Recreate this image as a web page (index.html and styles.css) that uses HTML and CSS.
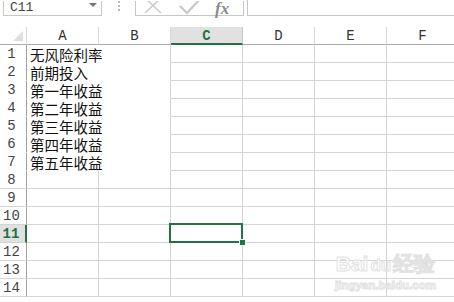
FILE: index.html
```html
<!DOCTYPE html>
<html>
<head>
<title>sheet</title>
<link rel="stylesheet" href="styles.css">
</head>
<body>
<div class="toolbar">
  <div class="namebox">C11<span class="drop"></span></div>
  <div class="dots">
    <svg width="4" height="12" viewBox="0 0 4 12"><rect x="1" y="1" width="2" height="2" fill="#b8b8b8"/><rect x="1" y="5" width="2" height="2" fill="#b8b8b8"/><rect x="1" y="9" width="2" height="2" fill="#b8b8b8"/></svg>
  </div>
  <div class="btns">
    <svg class="ico" width="20" height="14" viewBox="0 0 20 14"><path d="M2 -3 L18 12 M18 -3 L2 12" stroke="#cbcbcb" stroke-width="1.6" fill="none"/></svg>
    <svg class="ico" width="22" height="14" viewBox="0 0 22 14"><path d="M1 5 L8 12 L21 -2" stroke="#cbcbcb" stroke-width="2.4" fill="none"/></svg>
    <span class="fx">fx</span>
  </div>
  <div class="formula"></div>
</div>

<div class="sheet">
  <div class="row head">
    <div class="corner"><span class="tri"></span></div>
    <div class="colh">A</div><div class="colh">B</div><div class="colh sel">C</div>
    <div class="colh">D</div><div class="colh">E</div><div class="colh">F</div>
  </div>

  <div class="row"><div class="rh nb">1</div><div class="c nb nr txt">无风险利率</div><div class="c nb"></div><div class="c"></div><div class="c"></div><div class="c"></div><div class="c"></div></div>
  <div class="row"><div class="rh nb">2</div><div class="c nb nr txt">前期投入</div><div class="c nb"></div><div class="c"></div><div class="c"></div><div class="c"></div><div class="c"></div></div>
  <div class="row"><div class="rh nb">3</div><div class="c nb nr txt">第一年收益</div><div class="c nb"></div><div class="c"></div><div class="c"></div><div class="c"></div><div class="c"></div></div>
  <div class="row"><div class="rh nb">4</div><div class="c nb nr txt">第二年收益</div><div class="c nb"></div><div class="c"></div><div class="c"></div><div class="c"></div><div class="c"></div></div>
  <div class="row"><div class="rh nb">5</div><div class="c nb nr txt">第三年收益</div><div class="c nb"></div><div class="c"></div><div class="c"></div><div class="c"></div><div class="c"></div></div>
  <div class="row"><div class="rh nb">6</div><div class="c nb nr txt">第四年收益</div><div class="c nb"></div><div class="c"></div><div class="c"></div><div class="c"></div><div class="c"></div></div>
  <div class="row"><div class="rh nb">7</div><div class="c nb nr txt">第五年收益</div><div class="c nb"></div><div class="c"></div><div class="c"></div><div class="c"></div><div class="c"></div></div>
  <div class="row"><div class="rh">8</div><div class="c"></div><div class="c"></div><div class="c"></div><div class="c"></div><div class="c"></div><div class="c"></div></div>
  <div class="row"><div class="rh">9</div><div class="c"></div><div class="c"></div><div class="c"></div><div class="c"></div><div class="c"></div><div class="c"></div></div>
  <div class="row"><div class="rh">10</div><div class="c"></div><div class="c"></div><div class="c"></div><div class="c"></div><div class="c"></div><div class="c"></div></div>
  <div class="row"><div class="rh sel">11</div><div class="c"></div><div class="c"></div><div class="c active"><span class="handle"></span></div><div class="c"></div><div class="c"></div><div class="c"></div></div>
  <div class="row"><div class="rh">12</div><div class="c"></div><div class="c"></div><div class="c"></div><div class="c"></div><div class="c"></div><div class="c"></div></div>
  <div class="row"><div class="rh">13</div><div class="c"></div><div class="c"></div><div class="c"></div><div class="c"></div><div class="c"></div><div class="c"></div></div>
  <div class="row"><div class="rh">14</div><div class="c"></div><div class="c"></div><div class="c"></div><div class="c"></div><div class="c"></div><div class="c"></div></div>

  <div class="mark">
    <div class="brand">Bai<span class="paw">du</span>经验</div>
    <div class="url">jingyan.baidu.com</div>
  </div>
</div>
</body>
</html>
```

FILE: styles.css
```css
body {
  margin: 0;
  background-color: #fff;
  font-family: "Liberation Mono", monospace;
  overflow: hidden;
}

.toolbar {
  display: flex;
  height: 16px;
  align-items: flex-end;
}

.namebox {
  position: relative;
  margin-left: 3px;
  width: 99px;
  height: 15px;
  border: 1px solid #c6c6c6;
  border-top: none;
  color: #444;
  font-size: 13px;
  line-height: 14px;
  padding-left: 6px;
  box-sizing: border-box;
}

.drop {
  position: absolute;
  right: 4px;
  top: 2px;
  border-left: 4px solid transparent;
  border-right: 4px solid transparent;
  border-top: 4px solid #777;
}

.dots {
  display: flex;
  justify-content: center;
  align-items: flex-start;
  width: 33px;
  height: 16px;
}

.btns {
  display: flex;
  align-items: flex-start;
  gap: 16px;
  width: 109px;
  height: 15px;
  border: 1px solid #c6c6c6;
  border-top: none;
  padding-left: 7px;
  box-sizing: border-box;
}

.fx {
  font-family: "Liberation Serif", serif;
  font-style: italic;
  font-weight: bold;
  font-size: 17px;
  line-height: 15px;
  height: 15px;
  color: #8a8a8a;
  margin-left: -2px;
}

.formula {
  flex: 1;
  margin-left: 3px;
  height: 16px;
  border-left: 1px solid #c6c6c6;
  border-bottom: 1px solid #c6c6c6;
  box-sizing: border-box;
}

.sheet {
  position: relative;
  margin-top: 11px;
}

.row {
  display: grid;
  grid-template-columns: 27px repeat(6, 72px);
  height: 18px;
}

.row > div {
  box-sizing: border-box;
  height: 18px;
}

.corner {
  position: relative;
  border-right: 1px solid #dadada;
  border-bottom: 1px solid #ababab;
}

.tri {
  position: absolute;
  right: 3px;
  bottom: 3px;
  border-left: 10px solid transparent;
  border-bottom: 10px solid #dfdfdf;
}

.colh {
  border-right: 1px solid #dadada;
  border-bottom: 1px solid #ababab;
  text-align: center;
  font-size: 14px;
  line-height: 19px;
  color: #333;
}

.colh.sel {
  background-color: #e1e1e1;
  color: #217346;
  font-weight: bold;
  border-bottom: 2px solid #217346;
  border-right-color: #c6c6c6;
}

.rh {
  border-right: 1px solid #a0a0a0;
  border-bottom: 1px solid #d4d4d4;
  text-align: center;
  font-size: 14px;
  line-height: 18px;
  color: #444;
  padding-right: 3px;
}

.rh.sel {
  background-color: #e1e1e1;
  color: #217346;
  font-weight: bold;
  border-right: 2px solid #217346;
}

.c {
  position: relative;
  border-right: 1px solid #d4d4d4;
  border-bottom: 1px solid #d4d4d4;
}

.nb {
  border-bottom-color: transparent;
}

.nr {
  border-right-color: transparent;
}

.txt {
  padding-left: 3px;
  padding-top: 1px;
  font-family: "Noto Sans CJK SC", sans-serif;
  font-size: 14.5px;
  line-height: 17px;
  color: #111;
  white-space: nowrap;
  overflow: visible;
  z-index: 1;
}

.active::before {
  content: "";
  position: absolute;
  top: -2px;
  left: -2px;
  right: -1px;
  bottom: -1px;
  border: 2px solid #217346;
}

.handle {
  position: absolute;
  right: -3px;
  bottom: -3px;
  width: 5px;
  height: 5px;
  background-color: #217346;
  box-shadow: -1px -1px 0 #fff;
  z-index: 2;
}

.mark {
  position: absolute;
  left: 335px;
  top: 224px;
  color: #fff;
  text-align: center;
  font-family: "Liberation Sans", sans-serif;
  -webkit-text-stroke: 1px #e2e2e2;
}

.brand {
  font-size: 21px;
  font-weight: bold;
  line-height: 26px;
}

.brand .paw {
  font-size: 17px;
  margin: 0 2px;
}

.url {
  font-size: 11.5px;
  font-weight: bold;
  line-height: 12px;
}
```
